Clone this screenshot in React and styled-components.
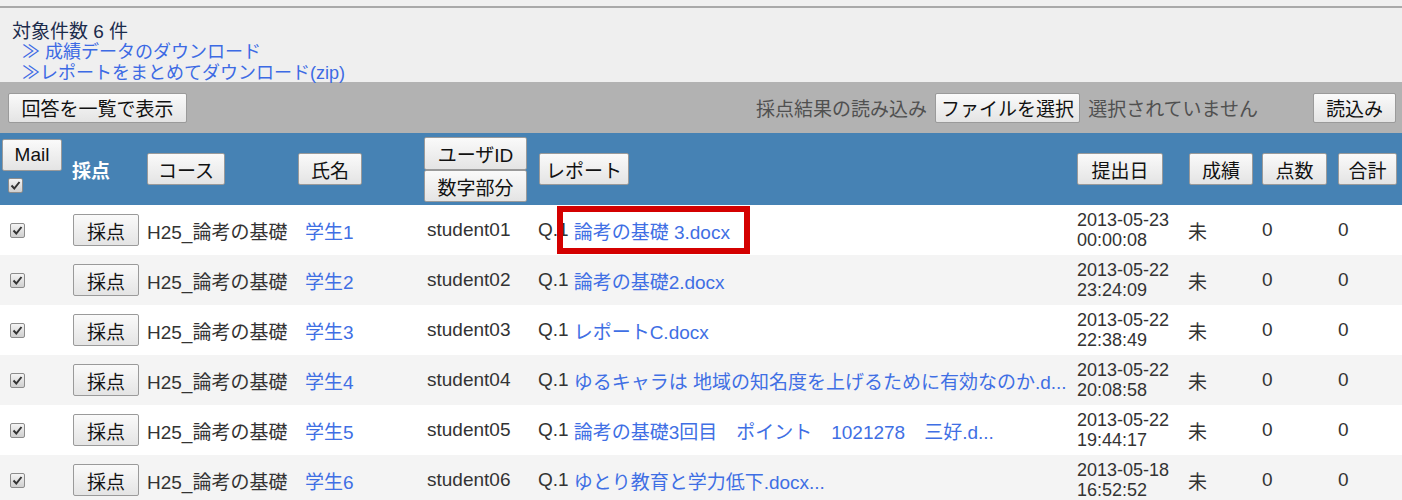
import React from "react";
import styled, { createGlobalStyle } from "styled-components";

const COLS = "65px 78px 154px 123px 112px 540px 112px 74px 76px 68px";

const rows = [
  { course: "H25_論考の基礎", name: "学生1", id: "student01", report: "論考の基礎 3.docx", date: "2013-05-23", time: "00:00:08", marked: true },
  { course: "H25_論考の基礎", name: "学生2", id: "student02", report: "論考の基礎2.docx", date: "2013-05-22", time: "23:24:09" },
  { course: "H25_論考の基礎", name: "学生3", id: "student03", report: "レポートC.docx", date: "2013-05-22", time: "22:38:49" },
  { course: "H25_論考の基礎", name: "学生4", id: "student04", report: "ゆるキャラは 地域の知名度を上げるために有効なのか.d...", date: "2013-05-22", time: "20:08:58" },
  { course: "H25_論考の基礎", name: "学生5", id: "student05", report: "論考の基礎3回目　ポイント　1021278　三好.d...", date: "2013-05-22", time: "19:44:17" },
  { course: "H25_論考の基礎", name: "学生6", id: "student06", report: "ゆとり教育と学力低下.docx...", date: "2013-05-18", time: "16:52:52" },
];

const Check = () => (
  <CheckBox>
    <svg width="11" height="11" viewBox="0 0 11 11">
      <path d="M1.5 5.5 L4.3 8.5 L9.5 2" fill="none" stroke="#333" strokeWidth="2" />
    </svg>
  </CheckBox>
);

const App = () => {
  return (
    <Page>
      <GlobalStyle />
      <Summary>
        <Count>対象件数 6 件</Count>
        <DownloadLink>≫ 成績データのダウンロード</DownloadLink>
        <DownloadLink>≫レポートをまとめてダウンロード(zip)</DownloadLink>
      </Summary>
      <Toolbar>
        <Button $w="179px" $h="30px">回答を一覧で表示</Button>
        <ImportGroup>
          <Label>採点結果の読み込み</Label>
          <Button $w="145px" $h="30px">ファイルを選択</Button>
          <Label>選択されていません</Label>
        </ImportGroup>
        <Button $w="83px" $h="30px">読込み</Button>
      </Toolbar>

      <HeaderRow>
        <MailCell>
          <Button $w="60px">Mail</Button>
          <Check />
        </MailCell>
        <HeadCell $pad="7px">
          <HeadText>採点</HeadText>
        </HeadCell>
        <HeadCell $pad="4px">
          <Button $w="78px">コース</Button>
        </HeadCell>
        <HeadCell $pad="1px">
          <Button $w="64px">氏名</Button>
        </HeadCell>
        <StackCell>
          <Button $w="103px" $h="33px">ユーザID</Button>
          <Button $w="103px" $h="32px">数字部分</Button>
        </StackCell>
        <HeadCell $pad="7px">
          <Button $w="90px">レポート</Button>
        </HeadCell>
        <HeadCell $pad="5px">
          <Button $w="86px">提出日</Button>
        </HeadCell>
        <HeadCell $pad="5px">
          <Button $w="64px">成績</Button>
        </HeadCell>
        <HeadCell $pad="4px">
          <Button $w="65px">点数</Button>
        </HeadCell>
        <HeadCell $pad="4px">
          <Button $w="59px">合計</Button>
        </HeadCell>
      </HeaderRow>

      {rows.map((r, i) => (
        <Row key={r.id} $odd={i % 2 === 1}>
          <Cell $pad="10px">
            <Check />
          </Cell>
          <Cell $pad="8px">
            <Button $w="66px">採点</Button>
          </Cell>
          <Cell $pad="4px">{r.course}</Cell>
          <Cell $pad="8px">
            <Link>{r.name}</Link>
          </Cell>
          <Cell $pad="7px">{r.id}</Cell>
          <ReportCell>
            Q.1 <Link>{r.report}</Link>
            {r.marked && <Marker />}
          </ReportCell>
          <DateCell>
            <span>{r.date}</span>
            <span>{r.time}</span>
          </DateCell>
          <Cell $pad="4px">未</Cell>
          <Cell $pad="4px">0</Cell>
          <Cell $pad="4px">0</Cell>
        </Row>
      ))}
    </Page>
  );
};

const GlobalStyle = createGlobalStyle`
  body {
    margin: 0;
    background: #f0f0f0;
    font-family: "Liberation Sans", "Noto Sans CJK JP", sans-serif;
    color: #222;
  }
`;

const Page = styled.div`
  width: 1402px;
  height: 500px;
  overflow: hidden;
  padding-top: 6px;
  box-sizing: border-box;
`;

const Summary = styled.div`
  height: 76px;
  box-sizing: border-box;
  border-top: 2px solid #a9a9a9;
  background: #efefef;
  padding: 13px 12px 0;
  line-height: 21px;
`;

const Count = styled.div`
  font-size: 19px;
  color: #1c2c4c;
`;

const DownloadLink = styled.div`
  font-size: 18px;
  color: #3c6ae4;
  margin-left: 10px;
`;

const Toolbar = styled.div`
  height: 51px;
  background: #b2b2b2;
  display: flex;
  align-items: center;
  padding: 0 6px 0 8px;
`;

const ImportGroup = styled.div`
  margin-left: auto;
  margin-right: 55px;
  display: flex;
  align-items: center;
  gap: 8px;
`;

const Label = styled.span`
  font-size: 19px;
  color: #505050;
`;

const Button = styled.button`
  width: ${(p) => p.$w || "auto"};
  height: ${(p) => p.$h || "32px"};
  padding: 0;
  border: 1px solid #9a9a9a;
  border-radius: 2px;
  background: linear-gradient(#fafafa, #e4e4e4);
  font-family: inherit;
  font-size: 19px;
  color: #111;
  cursor: pointer;
  flex-shrink: 0;
`;

const CheckBox = styled.span`
  width: 15px;
  height: 15px;
  box-sizing: border-box;
  border: 1px solid #8c8c8c;
  border-radius: 2px;
  background: linear-gradient(#f4f4f4, #cfcfcf);
  display: inline-flex;
  align-items: center;
  justify-content: center;
`;

const HeaderRow = styled.div`
  display: grid;
  grid-template-columns: ${COLS};
  height: 72px;
  background: #4682b4;
`;

const HeadCell = styled.div`
  display: flex;
  align-items: center;
  padding-left: ${(p) => p.$pad};
`;

const MailCell = styled.div`
  display: flex;
  flex-direction: column;
  align-items: flex-start;
  gap: 7px;
  padding: 6px 0 0 2px;

  ${CheckBox} {
    margin-left: 6px;
  }
`;

const StackCell = styled.div`
  display: flex;
  flex-direction: column;
  padding: 4px 0 0 4px;
`;

const HeadText = styled.span`
  color: #fff;
  font-weight: bold;
  font-size: 19px;
`;

const Row = styled.div`
  display: grid;
  grid-template-columns: ${COLS};
  height: 50px;
  background: ${(p) => (p.$odd ? "#f4f4f4" : "#fff")};
  font-size: 19px;
  color: #333;
`;

const Cell = styled.div`
  display: flex;
  align-items: center;
  padding-left: ${(p) => p.$pad};
  white-space: nowrap;
`;

const ReportCell = styled(Cell)`
  position: relative;
  padding-left: 6px;
  gap: 5px;
`;

const DateCell = styled.div`
  display: flex;
  flex-direction: column;
  justify-content: center;
  padding-left: 5px;
  line-height: 20px;
  font-size: 18px;
`;

const Link = styled.span`
  color: #3f6fe4;
`;

const Marker = styled.span`
  position: absolute;
  left: 25px;
  top: 1px;
  width: 193px;
  height: 48px;
  box-sizing: border-box;
  border: 6px solid #d40000;
  pointer-events: none;
`;

export default App;
